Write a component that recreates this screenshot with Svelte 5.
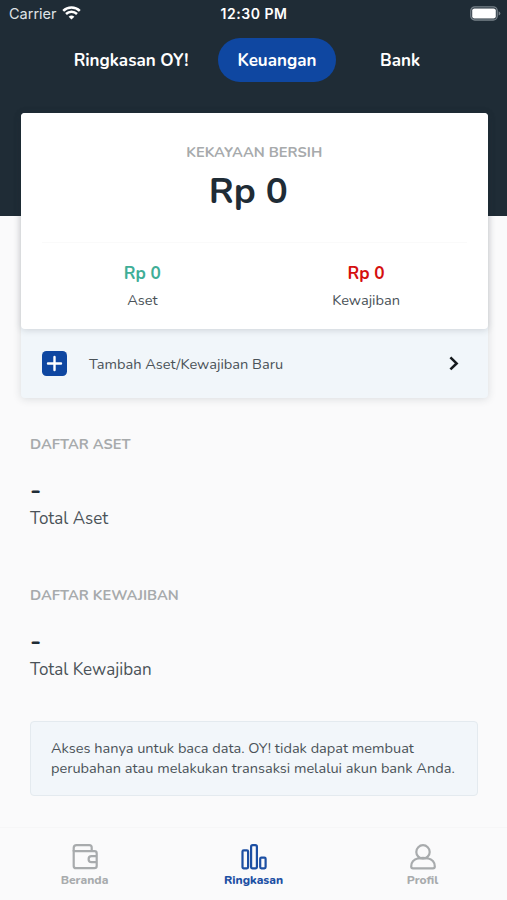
<script>
  let activeTab = "Keuangan";
  let activePage = "Ringkasan";

  const tabs = [
    { name: "Ringkasan OY!", kind: "summary" },
    { name: "Keuangan", kind: "finance" },
    { name: "Bank", kind: "bank" },
  ];

  const sections = [
    { title: "DAFTAR ASET", total: "-", label: "Total Aset", kind: "assets" },
    { title: "DAFTAR KEWAJIBAN", total: "-", label: "Total Kewajiban", kind: "debts" },
  ];

  const pages = ["Beranda", "Ringkasan", "Profil"];
</script>

<div class="screen">
  <header>
    <div class="statusBar">
      <div class="carrier">
        <span>Carrier</span>
        <svg width="19" height="14" viewBox="0 0 19 14">
          <path d="M1.2 4.9 A12 12 0 0 1 17.8 4.9" />
          <path d="M4 8 A8 8 0 0 1 15 8" />
          <path class="dot" d="M9.5 13.6 L6.6 10.7 A4.3 4.3 0 0 1 12.4 10.7 Z" />
        </svg>
      </div>
      <div class="time">12:30 PM</div>
      <div class="battery">
        <svg width="31" height="15" viewBox="0 0 31 15">
          <rect class="case" x="0.8" y="0.8" width="26.4" height="13.2" rx="4" />
          <rect class="charge" x="2.2" y="2.4" width="23.6" height="10" rx="2.2" />
          <path class="tip" d="M28.6 5.2 Q30.4 6 30.4 7.4 Q30.4 8.8 28.6 9.6 Z" />
        </svg>
      </div>
    </div>

    <nav class="tabs">
      {#each tabs as { name, kind }}
        <button
          class="tab {kind}"
          class:active={activeTab === name}
          on:click={() => (activeTab = name)}><span>{name}</span></button
        >
      {/each}
    </nav>
  </header>

  <main>
    <div class="cardGroup">
      <div class="card">
        <div class="cardTitle">KEKAYAAN BERSIH</div>
        <div class="netWorth">Rp 0</div>
        <div class="divider"></div>
        <div class="split">
          <div class="part">
            <div class="amount asset">Rp 0</div>
            <div class="caption">Aset</div>
          </div>
          <div class="part">
            <div class="amount debt">Rp 0</div>
            <div class="caption">Kewajiban</div>
          </div>
        </div>
      </div>
      <button class="addRow">
        <svg class="plus" width="25" height="25" viewBox="0 0 25 25">
          <rect width="25" height="25" rx="4.5" />
          <path d="M12.5 6 V19 M6 12.5 H19" />
        </svg>
        <span class="addText">Tambah Aset/Kewajiban Baru</span>
        <svg class="chevron" width="10" height="15" viewBox="0 0 10 15">
          <path d="M1.4 1.4 L7.6 7.4 L1.4 13.4" />
        </svg>
      </button>
    </div>

    {#each sections as { title, total, label, kind }}
      <section class={kind}>
        <h2>{title}</h2>
        <div class="total">{total}</div>
        <div class="totalLabel">{label}</div>
      </section>
    {/each}

    <div class="notice">
      <div class="line">Akses hanya untuk baca data. OY! tidak dapat membuat</div>
      <div class="line">perubahan atau melakukan transaksi melalui akun bank Anda.</div>
    </div>
  </main>

  <footer>
    {#each pages as page}
      <button
        class="page"
        class:current={activePage === page}
        on:click={() => (activePage = page)}
      >
        <svg width="26" height="26" viewBox="0 0 26 26">
          {#if page === "Beranda"}
            <path d="M1.7 7.6 V4 Q1.7 1.2 4.5 1.2 H17.3 Q19.7 1.2 19.7 3.6 V6.8" />
            <path d="M1.7 7.2 H22.5 Q24.7 7.2 24.7 9.4 V22 Q24.7 24.2 22.5 24.2 H3.9 Q1.7 24.2 1.7 22 Z" />
            <path d="M24.7 12.2 H19.6 A3 3 0 0 0 19.6 18.2 H24.7" />
          {:else if page === "Ringkasan"}
            <rect x="1.5" y="6.4" width="5.6" height="17.9" rx="1.2" />
            <rect x="10.1" y="1.2" width="5.8" height="23.1" rx="1.6" />
            <rect x="19.2" y="13.6" width="5.4" height="10.7" rx="1.2" />
          {:else}
            <circle cx="13" cy="7.9" r="6.7" />
            <path d="M8.4 14.3 C3.8 15.4 1.2 18.4 1.2 22.4 Q1.2 24.3 3 24.3 H23 Q24.8 24.3 24.8 22.4 C24.8 18.4 22.2 15.4 17.6 14.3 Q13 13.6 8.4 14.3" />
          {/if}
        </svg>
        <span>{page}</span>
      </button>
    {/each}
  </footer>
</div>

<style>
  :global(body) {
    margin: 0;
    background-color: #fafafb;
  }

  .screen {
    width: 507px;
    height: 900px;
    display: flex;
    flex-direction: column;
    overflow: hidden;
    background-color: #fafafb;
    color: #4a5258;
    font-family: Nunito, Lato, "Open Sans", sans-serif;
  }

  button {
    border: none;
    background: none;
    padding: 0;
    margin: 0;
    color: inherit;
    font: inherit;
    cursor: pointer;
  }

  span,
  .line {
    white-space: nowrap;
  }

  header {
    flex: none;
    height: 216px;
    background-color: #1f2c36;
    color: #fff;
  }

  .statusBar {
    display: grid;
    grid-template-columns: 1fr auto 1fr;
    align-items: center;
    height: 27px;
    padding: 0 6px 0 9px;
    font-family: Inter, Roboto, sans-serif;
    font-size: 14.5px;
  }

  .carrier {
    display: flex;
    align-items: center;
    gap: 5px;
    color: #dfe3e6;
  }

  .carrier svg {
    margin-top: -2px;
    fill: none;
    stroke: #fff;
    stroke-width: 2.5;
  }

  .carrier .dot {
    fill: #fff;
    stroke: none;
  }

  .time {
    margin-left: -2px;
    font-weight: 600;
    font-size: 14px;
    letter-spacing: 0.55px;
  }

  .battery {
    display: flex;
    justify-content: flex-end;
  }

  .case {
    fill: none;
    stroke: #78828a;
    stroke-width: 1.3;
  }

  .charge {
    fill: #fff;
  }

  .tip {
    fill: #78828a;
  }

  .tabs {
    display: flex;
    margin: 11px 0 0 44px;
  }

  .tab {
    height: 44px;
    border-radius: 22px;
    font-size: 17px;
    font-weight: 700;
  }

  .summary {
    width: 174px;
  }

  .finance {
    width: 118px;
  }

  .bank {
    width: 128px;
  }

  .active {
    background-color: #0f47a1;
  }

  main {
    flex: 1;
    margin-top: -103px;
  }

  .cardGroup {
    margin: 0 19px 0 20.5px;
    border-radius: 4px;
    box-shadow: 0 1px 8px rgba(31, 44, 54, 0.15);
    background-color: #f1f6fa;
  }

  .card {
    height: 216px;
    border-radius: 4px;
    background-color: #fff;
    box-shadow: 0 1px 7px rgba(31, 44, 54, 0.18);
    text-align: center;
  }

  .cardTitle {
    padding-top: 29px;
    line-height: 20px;
    font-size: 14.65px;
    font-weight: 700;
    color: #a7aaac;
  }

  .netWorth {
    height: 80px;
    padding-right: 12px;
    line-height: 59px;
    font-size: 36.7px;
    font-weight: 700;
    color: #1f2c36;
  }

  .divider {
    height: 1px;
    margin: 0 21px;
    background-color: #fafafa;
  }

  .split {
    display: flex;
    margin: 0 10px;
    padding-top: 19px;
  }

  .part {
    flex: 1;
  }

  .amount {
    line-height: 24px;
    font-size: 17.2px;
    font-weight: 700;
  }

  .asset {
    color: #3fae97;
  }

  .debt {
    color: #d5100f;
  }

  .caption {
    margin-top: 3px;
    line-height: 22px;
    font-size: 14.6px;
  }

  .addRow {
    display: flex;
    align-items: center;
    width: 100%;
    height: 69px;
    padding: 0 29px 0 21.5px;
    font-size: 14.6px;
  }

  .plus {
    margin-right: 22px;
    fill: #0f47a1;
  }

  .plus path {
    stroke: #fff;
    stroke-width: 2.4;
    stroke-linecap: round;
  }

  .chevron {
    margin-left: auto;
    fill: none;
    stroke: #15191d;
    stroke-width: 2.6;
  }

  section {
    padding-left: 30px;
  }

  .assets {
    height: 116px;
    padding-top: 36px;
    margin-bottom: 35px;
  }

  .debts {
    height: 137.5px;
  }

  section h2 {
    margin: 0;
    line-height: 20px;
    font-size: 14.6px;
    font-weight: 700;
    color: #a7aaac;
  }

  .total {
    height: 40px;
    margin-top: 13px;
    line-height: 48px;
    font-size: 26px;
    font-weight: 700;
    color: #1f2c36;
  }

  .totalLabel {
    line-height: 24px;
    font-size: 17px;
  }

  .notice {
    box-sizing: border-box;
    height: 75px;
    margin: -1.5px 29px 0 30px;
    padding: 16px 20px;
    border: 1px solid #e4eaef;
    border-radius: 4px;
    background-color: #f2f6fa;
    line-height: 20px;
    font-size: 14.55px;
  }

  footer {
    flex: none;
    display: grid;
    grid-template-columns: repeat(3, 1fr);
    height: 72px;
    border-top: 1px solid #f6f6f7;
  }

  .page {
    display: flex;
    flex-direction: column;
    align-items: center;
    padding-top: 16px;
    color: #a8abad;
    font-size: 12px;
    font-weight: 800;
    line-height: 20px;
  }

  .page svg {
    fill: none;
    stroke: currentColor;
    stroke-width: 2.2;
  }

  .current {
    color: #1c4fa3;
  }
</style>
